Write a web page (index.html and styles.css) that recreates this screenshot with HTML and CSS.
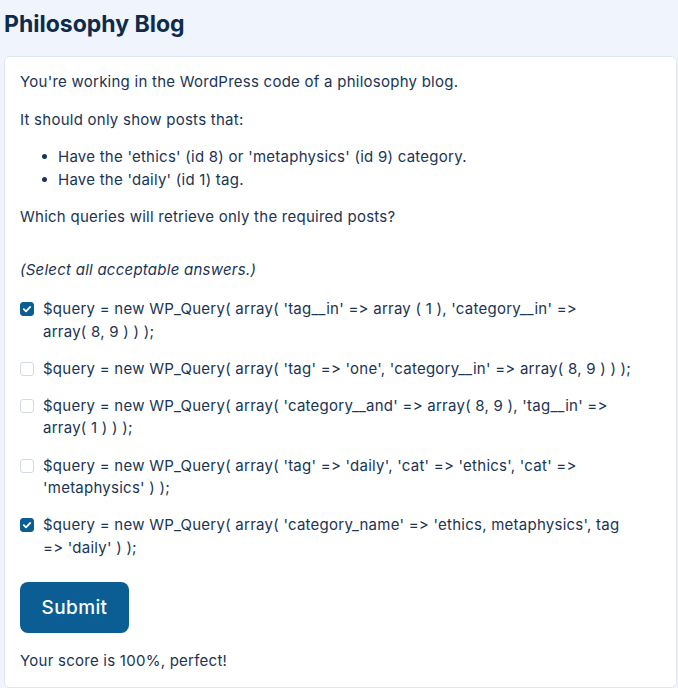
FILE: index.html
```html
<!DOCTYPE html>
<html lang="en">
<head>
<meta charset="utf-8">
<title>Philosophy Blog</title>
<link rel="stylesheet" href="styles.css">
</head>
<body>
<h1 class="title">Philosophy Blog</h1>
<div class="card">
  <p class="para">You're working in the WordPress code of a philosophy blog.</p>
  <p class="para">It should only show posts that:</p>
  <ul class="list">
    <li>Have the 'ethics' (id 8) or 'metaphysics' (id 9) category.</li>
    <li>Have the 'daily' (id 1) tag.</li>
  </ul>
  <p class="para">Which queries will retrieve only the required posts?</p>
  <p class="para hint">(Select all acceptable answers.)</p>
  <div class="options">
    <label class="option">
      <span class="box checked"><svg viewBox="0 0 14 14" width="14" height="14"><path d="M3.8 7.2 L6 9.3 L10.2 4.9" fill="none" stroke="#fff" stroke-width="1.8" stroke-linecap="round" stroke-linejoin="round"/></svg></span>
      <span class="opt-text">$query = new WP_Query( array( 'tag__in' =&gt; array ( 1 ), 'category__in' =&gt;<br>array( 8, 9 ) ) );</span>
    </label>
    <label class="option">
      <span class="box"></span>
      <span class="opt-text">$query = new WP_Query( array( 'tag' =&gt; 'one', 'category__in' =&gt; array( 8, 9 ) ) );</span>
    </label>
    <label class="option">
      <span class="box"></span>
      <span class="opt-text">$query = new WP_Query( array( 'category__and' =&gt; array( 8, 9 ), 'tag__in' =&gt;<br>array( 1 ) ) );</span>
    </label>
    <label class="option">
      <span class="box"></span>
      <span class="opt-text">$query = new WP_Query( array( 'tag' =&gt; 'daily', 'cat' =&gt; 'ethics', 'cat' =&gt;<br>'metaphysics' ) );</span>
    </label>
    <label class="option">
      <span class="box checked"><svg viewBox="0 0 14 14" width="14" height="14"><path d="M3.8 7.2 L6 9.3 L10.2 4.9" fill="none" stroke="#fff" stroke-width="1.8" stroke-linecap="round" stroke-linejoin="round"/></svg></span>
      <span class="opt-text">$query = new WP_Query( array( 'category_name' =&gt; 'ethics, metaphysics', tag<br>=&gt; 'daily' ) );</span>
    </label>
  </div>
  <button class="submit" type="button">Submit</button>
  <p class="score">Your score is 100%, perfect!</p>
</div>
</body>
</html>
```

FILE: styles.css
```css
html, body {
  background: #f0f4fc;
}
body {
  margin: 0 1px 0 4px;
  font-family: Inter, "Open Sans", sans-serif;
  color: #1a3453;
  font-size: 15px;
  line-height: 22.5px;
  letter-spacing: 0.25px;
}
.title {
  margin: 11px 0 19px 0;
  font-size: 23px;
  line-height: 26px;
  font-weight: 700;
  letter-spacing: 0;
  color: #0e2b4b;
}
.card {
  background: #ffffff;
  border: 1px solid #dfe6f0;
  border-radius: 6px;
  padding: 14px 15px 14px 15px;
}
.para {
  margin: 0 0 15px 0;
}
.list {
  margin: 0 0 15px 0;
  padding-left: 22px;
  list-style: none;
}
.list li::before {
  content: "";
  display: inline-block;
  width: 5px;
  height: 5px;
  border-radius: 50%;
  background: currentColor;
  margin: 0 11px 0 0;
  vertical-align: 3px;
}
.hint {
  margin-top: 30px;
  margin-bottom: 17px;
  font-style: italic;
}
.options {
  display: flex;
  flex-direction: column;
  gap: 14.7px;
}
.option {
  display: flex;
  align-items: flex-start;
  gap: 9px;
}
.box {
  flex: none;
  width: 14px;
  height: 14px;
  margin-top: 4px;
  box-sizing: border-box;
  border: 1px solid #d3dae5;
  border-radius: 3px;
  background: #fff;
}
.box.checked {
  background: #0b5e94;
  border-color: #0b5e94;
}
.box svg {
  display: block;
  margin: -1px;
}
.submit {
  display: block;
  margin-top: 23px;
  width: 109px;
  height: 51px;
  border: none;
  border-radius: 8px;
  background: #0b5e94;
  color: #fff;
  font-family: inherit;
  font-size: 19px;
  font-weight: 500;
  letter-spacing: 0.4px;
  padding: 0;
}
.score {
  margin: 17px 0 0 0;
}
```
